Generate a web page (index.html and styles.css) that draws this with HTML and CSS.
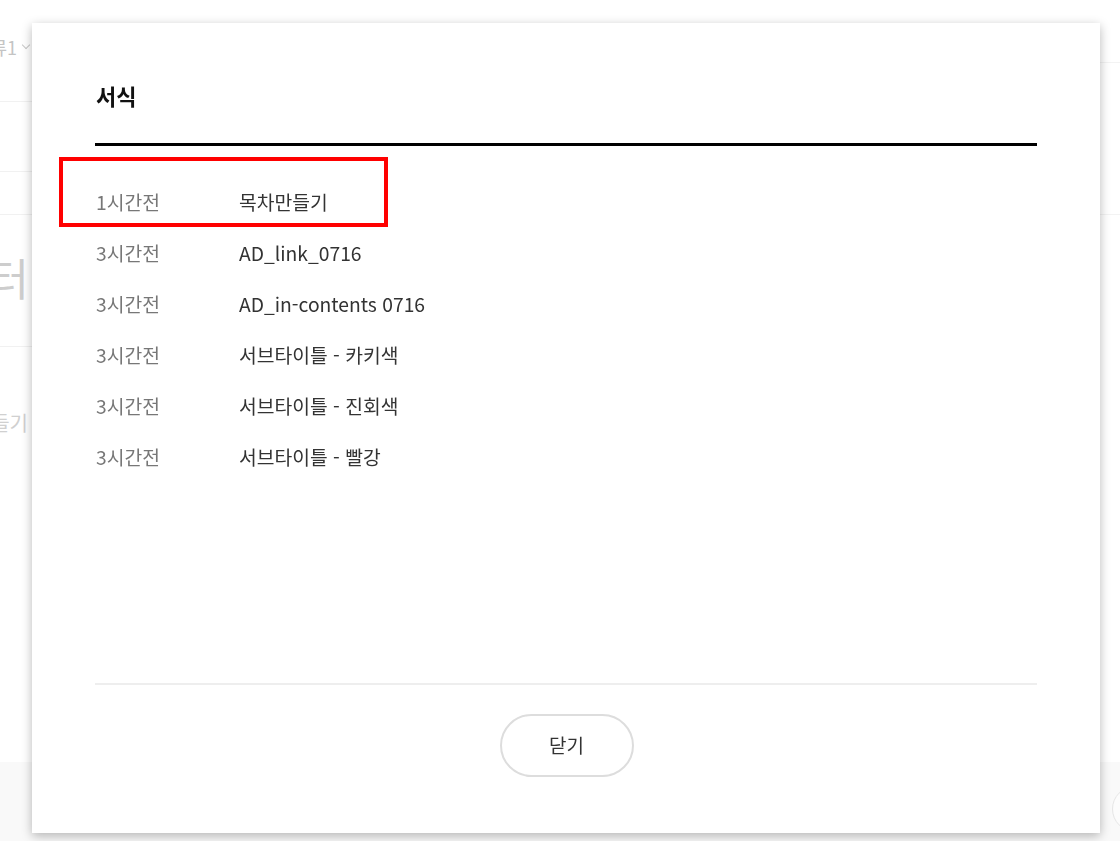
FILE: index.html
```html
<!DOCTYPE html>
<html lang="ko">
<head>
<meta charset="utf-8">
<title>서식</title>
<link rel="stylesheet" href="styles.css">
</head>
<body>
<div class="bg">
  <div class="bg-top">
    <div class="bg-left">
      <div class="bl-row bl-head"><span class="bl-text">분류1<span class="chev"></span></span></div>
      <div class="bl-row bl-r2"></div>
      <div class="bl-row bl-r3"></div>
      <div class="bl-row bl-r4"><span class="bl-big">에디터</span></div>
      <div class="bl-row bl-r5"><span class="bl-small">목차만들기</span></div>
    </div>
    <div class="bg-center"></div>
    <div class="bg-right">
      <div class="br-r1"></div>
      <div class="br-r2"></div>
    </div>
  </div>
  <div class="bg-footer">
    <div class="bf-circle"></div>
  </div>
</div>

<div class="modal">
  <div class="modal-head">
    <h2 class="modal-title">서식</h2>
  </div>
  <ul class="modal-list">
    <li class="item"><span class="item-date">1시간전</span><span class="item-name">목차만들기</span></li>
    <li class="item"><span class="item-date">3시간전</span><span class="item-name">AD_link_0716</span></li>
    <li class="item"><span class="item-date">3시간전</span><span class="item-name">AD_in-contents 0716</span></li>
    <li class="item"><span class="item-date">3시간전</span><span class="item-name">서브타이틀 - 카키색</span></li>
    <li class="item"><span class="item-date">3시간전</span><span class="item-name">서브타이틀 - 진회색</span></li>
    <li class="item"><span class="item-date">3시간전</span><span class="item-name">서브타이틀 - 빨강</span></li>
  </ul>
  <div class="modal-foot">
    <button class="btn-close" type="button">닫기</button>
  </div>
</div>

<div class="highlight"></div>
</body>
</html>
```

FILE: styles.css
```css
* { box-sizing: border-box; }
html, body {
  margin: 0;
  padding: 0;
  width: 1120px;
  height: 841px;
  overflow: hidden;
  background: #ffffff;
  font-family: "Noto Sans CJK KR", "Noto Sans", sans-serif;
}

/* faded page behind the dialog */
.bg {
  display: flex;
  flex-direction: column;
  height: 841px;
}
.bg-top {
  display: flex;
  height: 762px;
}
.bg-left {
  width: 32px;
  overflow: hidden;
  display: flex;
  flex-direction: column;
}
.bl-row {
  display: flex;
  justify-content: flex-end;
  align-items: center;
  border-bottom: 1px solid #f1f1f1;
  white-space: nowrap;
}
.bl-head { height: 102px; padding-bottom: 8px; }
.bl-r2 { height: 70px; }
.bl-r3 { height: 43px; }
.bl-r4 { height: 132px; padding-bottom: 8px; }
.bl-r5 { height: 90px; border-bottom: none; padding-top: 60px; }
.bl-text {
  font-size: 18px;
  color: #c4c4c4;
  display: flex;
  align-items: center;
  margin-right: 3px;
}
.chev {
  display: inline-block;
  width: 6px;
  height: 6px;
  border-right: 1px solid #c8c8c8;
  border-bottom: 1px solid #c8c8c8;
  transform: rotate(45deg);
  margin-left: 6px;
  margin-top: -4px;
}
.bl-big {
  font-size: 44px;
  color: #cdcdcd;
  margin-right: 3px;
}
.bl-small {
  font-size: 20px;
  color: #d0d0d0;
  margin-right: 4px;
}
.bg-center { flex: 1; }
.bg-right {
  width: 20px;
  display: flex;
  flex-direction: column;
}
.br-r1 { height: 63px; border-bottom: 1px solid #f3f3f3; }
.br-r2 { height: 152px; border-bottom: 1px solid #f3f3f3; }
.bg-footer {
  flex: 1;
  background: #f9f9f9;
  display: flex;
  justify-content: flex-end;
  align-items: center;
  overflow: hidden;
}
.bf-circle {
  width: 46px;
  height: 46px;
  border: 1px solid #e6e6e6;
  border-radius: 50%;
  background: #fcfcfc;
  margin-right: -38px;
  margin-top: 14px;
  flex: none;
}

/* dialog */
.modal {
  position: fixed;
  top: 23px;
  left: 32px;
  width: 1068px;
  height: 810px;
  background: #ffffff;
  box-shadow: 0 3px 10px rgba(0, 0, 0, 0.28);
  padding: 0 63px;
  display: flex;
  flex-direction: column;
}
.modal-head {
  padding-top: 57px;
  padding-bottom: 33px;
  border-bottom: 3px solid #000000;
}
.modal-title {
  margin: 0;
  font-size: 22px;
  line-height: 30px;
  font-weight: 700;
  color: #111111;
  padding-left: 1px;
}
.modal-list {
  list-style: none;
  margin: 0;
  padding: 30px 0 0;
  flex: 1;
}
.item {
  display: flex;
  align-items: center;
  height: 51px;
  font-size: 19.3px;
  padding-left: 1px;
}
.item-date {
  width: 143px;
  color: #777777;
}
.item-name {
  color: #333333;
}
.modal-foot {
  border-top: 2px solid #eeeeee;
  padding-top: 29px;
  padding-bottom: 56px;
  display: flex;
  justify-content: center;
}
.btn-close {
  width: 134px;
  height: 63px;
  border: 2px solid #dddddd;
  border-radius: 32px;
  background: #ffffff;
  font-family: "Noto Sans CJK KR", "Noto Sans", sans-serif;
  font-size: 19px;
  color: #333333;
  padding: 0 0 2px;
  margin-left: 1px;
}

/* annotation box */
.highlight {
  position: fixed;
  left: 59px;
  top: 157px;
  width: 329px;
  height: 70px;
  border: 4px solid #ff0000;
}
```
